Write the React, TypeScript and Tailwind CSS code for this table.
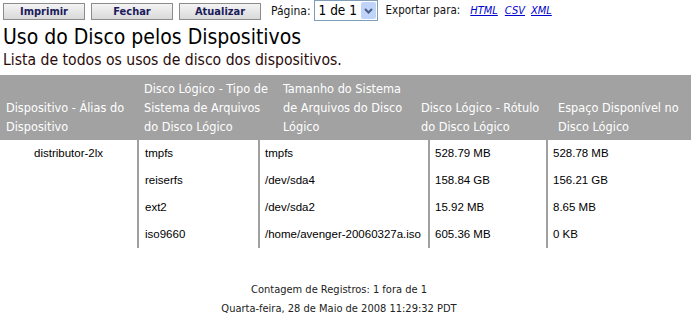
import React from "react";

const tahoma = "font-['DejaVu_Sans_Condensed','DejaVu_Sans',sans-serif]";
const bitmap = "font-['Liberation_Sans',Arial,sans-serif]";

const rows = [
  { fs: "tmpfs", label: "tmpfs", size: "528.79 MB", free: "528.78 MB" },
  { fs: "reiserfs", label: "/dev/sda4", size: "158.84 GB", free: "156.21 GB" },
  { fs: "ext2", label: "/dev/sda2", size: "15.92 MB", free: "8.65 MB" },
  { fs: "iso9660", label: "/home/avenger-20060327a.iso", size: "605.36 MB", free: "0 KB" },
];

const headers: string[][] = [
  ["Dispositivo - Álias do", "Dispositivo"],
  ["Disco Lógico - Tipo de", "Sistema de Arquivos", "do Disco Lógico"],
  ["Tamanho do Sistema", "de Arquivos do Disco", "Lógico"],
  ["Disco Lógico - Rótulo", "do Disco Lógico"],
  ["Espaço Disponível no", "Disco Lógico"],
];

function ToolButton({ label }: { label: string }) {
  return (
    <button
      className={`h-[17px] w-[82px] border border-[#8c8c8c] bg-gradient-to-b from-[#f4f4f4] to-[#d9d9d9] text-[11px] font-bold leading-none text-[#1c1c5c] ${tahoma}`}
    >
      {label}
    </button>
  );
}

export default function App() {
  return (
    <div className={`min-h-screen bg-white text-[#111] ${tahoma}`}>
      {/* barra de ferramentas */}
      <div className="flex h-[22px] items-center gap-[6px] pl-[3px]">
        <ToolButton label="Imprimir" />
        <ToolButton label="Fechar" />
        <ToolButton label="Atualizar" />
        <span className="ml-[4px] text-[12px]">Página:</span>
        <div className="ml-[-3px] flex h-[21px] w-[64px] items-center justify-between self-start border border-[#7f9db9] pl-[4px] pr-[1px]">
          <span className="whitespace-nowrap text-[13.5px] leading-none text-black">1 de 1</span>
          <span className="flex h-[17px] w-[15px] items-center justify-center rounded-[2px] bg-[#c0d4fa]">
            <svg width="9" height="6" viewBox="0 0 9 6">
              <path d="M1 1 L4.5 4.5 L8 1" fill="none" stroke="#4a5f86" strokeWidth="2" />
            </svg>
          </span>
        </div>
        <span className="ml-[2px] whitespace-nowrap text-[11.5px]">Exportar para:</span>
        <a className="ml-[4px] text-[11px] italic text-[#0000cc] underline">HTML</a>
        <a className="ml-[1px] text-[11px] italic text-[#0000cc] underline">CSV</a>
        <a className="text-[11px] italic text-[#0000cc] underline">XML</a>
      </div>

      <h1 className="mt-[2px] pl-[3px] text-[21px] leading-[26px] text-black">
        Uso do Disco pelos Dispositivos
      </h1>
      <p className="pl-[3px] text-[15.6px] leading-[21px] text-[#2a0a0a]">
        Lista de todos os usos de disco dos dispositivos.
      </p>

      {/* cabeçalho */}
      <div className="mt-[4px] grid h-[65px] grid-cols-[138px_139px_138px_137px_1fr] bg-[#a2a2a2] py-[4px] text-[12.6px] leading-[19px] text-white">
        {headers.map((lines, i) => (
          <div key={i} className="flex flex-col justify-end whitespace-nowrap pl-[6px]">
            {lines.map((l) => (
              <span key={l}>{l}</span>
            ))}
          </div>
        ))}
      </div>

      {/* corpo */}
      <div className={`grid grid-cols-[137px_121px_170px_118px_1fr] text-[11.5px] text-black ${bitmap}`}>
        {rows.map((r, i) => (
          <React.Fragment key={i}>
            <div className="flex h-[27px] items-center justify-center">
              {i === 0 ? "distributor-2lx" : ""}
            </div>
            <div className="flex h-[27px] items-center border-l-2 border-[#a0a0a0] pl-[6px]">{r.fs}</div>
            <div className="flex h-[27px] items-center border-l-2 border-[#a0a0a0] pl-[5px]">{r.label}</div>
            <div className="flex h-[27px] items-center border-l-2 border-[#a0a0a0] pl-[5px]">{r.size}</div>
            <div className="flex h-[27px] items-center border-l-2 border-[#a0a0a0] pl-[5px]">{r.free}</div>
          </React.Fragment>
        ))}
      </div>

      {/* rodapé */}
      <div className="mt-[32px] flex w-[678px] flex-col items-center text-[11px] leading-[19px] text-[#222]">
        <span>Contagem de Registros: 1 fora de 1</span>
        <span>Quarta-feira, 28 de Maio de 2008 11:29:32 PDT</span>
      </div>
    </div>
  );
}
